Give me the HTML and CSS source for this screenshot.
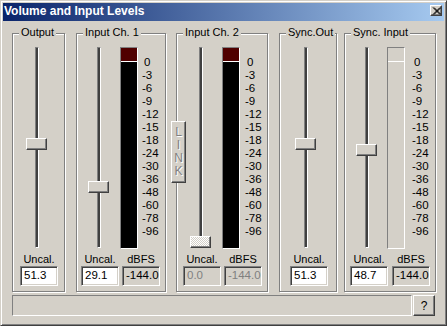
FILE: index.html
```html
<!DOCTYPE html>
<html>
<head>
<meta charset="utf-8">
<title>Volume and Input Levels</title>
<link rel="stylesheet" href="styles.css">
</head>
<body>
<div class="window">
  <div class="titlebar">
    <span class="title">Volume and Input Levels</span>
    <span class="close"><svg width="9" height="8" viewBox="0 0 9 8"><path d="M1 0.5 L8 7.5 M2 0.5 L9 7.5 M8 0.5 L1 7.5 M9 0.5 L2 7.5" stroke="#000" stroke-width="1" fill="none"/></svg></span>
  </div>
  <div class="groups">
    <section class="group g-out">
      <span class="legend">Output</span>
      <div class="upper">
        <div class="slider"><div class="track"></div><div class="thumb" style="top:91px"></div></div>
      </div>
      <div class="fields">
        <div class="field"><span class="cap">Uncal.</span><span class="edit">51.3</span></div>
      </div>
    </section>

    <section class="group g-ch1">
      <span class="legend">Input Ch. 1</span>
      <div class="upper">
        <div class="slider"><div class="track"></div><div class="thumb" style="top:134px"></div></div>
        <div class="meter"><div class="peak"></div></div>
        <ul class="scale">
          <li class="zero">0</li><li>-3</li><li>-6</li><li>-9</li><li>-12</li><li>-15</li><li>-18</li><li>-24</li><li>-30</li><li>-36</li><li>-48</li><li>-60</li><li>-78</li><li>-96</li>
        </ul>
      </div>
      <div class="fields">
        <div class="field"><span class="cap">Uncal.</span><span class="edit">29.1</span></div>
        <div class="field"><span class="cap">dBFS</span><span class="edit ro">-144.0</span></div>
      </div>
    </section>

    <section class="group g-ch2">
      <span class="legend">Input Ch. 2</span>
      <div class="link"><span>L</span><span>I</span><span>N</span><span>K</span></div>
      <div class="upper">
        <div class="slider"><div class="track"></div><div class="thumb off" style="top:189px"></div></div>
        <div class="meter"><div class="peak"></div></div>
        <ul class="scale">
          <li class="zero">0</li><li>-3</li><li>-6</li><li>-9</li><li>-12</li><li>-15</li><li>-18</li><li>-24</li><li>-30</li><li>-36</li><li>-48</li><li>-60</li><li>-78</li><li>-96</li>
        </ul>
      </div>
      <div class="fields">
        <div class="field"><span class="cap">Uncal.</span><span class="edit off">0.0</span></div>
        <div class="field"><span class="cap">dBFS</span><span class="edit off">-144.0</span></div>
      </div>
    </section>

    <section class="group g-sout">
      <span class="legend">Sync.Out</span>
      <div class="upper">
        <div class="slider"><div class="track"></div><div class="thumb" style="top:91px"></div></div>
      </div>
      <div class="fields">
        <div class="field"><span class="cap">Uncal.</span><span class="edit">51.3</span></div>
      </div>
    </section>

    <section class="group g-sin">
      <span class="legend">Sync. Input</span>
      <div class="upper">
        <div class="slider"><div class="track"></div><div class="thumb" style="top:97px"></div></div>
        <div class="meter idle"><div class="peak"></div></div>
        <ul class="scale">
          <li class="zero">0</li><li>-3</li><li>-6</li><li>-9</li><li>-12</li><li>-15</li><li>-18</li><li>-24</li><li>-30</li><li>-36</li><li>-48</li><li>-60</li><li>-78</li><li>-96</li>
        </ul>
      </div>
      <div class="fields">
        <div class="field"><span class="cap">Uncal.</span><span class="edit">48.7</span></div>
        <div class="field"><span class="cap">dBFS</span><span class="edit ro">-144.0</span></div>
      </div>
    </section>
  </div>
  <div class="bottom">
    <div class="status"></div>
    <div class="help">?</div>
  </div>
</div>
</body>
</html>
```

FILE: styles.css
```css
* { box-sizing: border-box; }
html, body { margin: 0; padding: 0; }
body {
  width: 447px; height: 326px; overflow: hidden;
  background: #d4d0c8;
  font-family: "Liberation Sans", Arial, sans-serif;
  font-size: 11px; color: #000;
}
.window {
  width: 447px; height: 326px;
  background: #d4d0c8;
  border: 1px solid; border-color: #d4d0c8 #404040 #404040 #d4d0c8;
  box-shadow: inset 1px 1px 0 #fff, inset -1px -1px 0 #808080;
  padding: 2px;
  display: flex; flex-direction: column;
}
.titlebar {
  height: 18px; flex: none;
  display: flex; align-items: flex-start; justify-content: space-between;
  padding: 0 2px 0 1px;
  background: linear-gradient(to right, #0a246a, #a6caf0);
}
.title { color: #fff; font-weight: bold; font-size: 12px; line-height: 16px; }
.close {
  margin-top: 2px; width: 12px; height: 11px;
  background: #d4d0c8;
  border: 1px solid; border-color: #fff #404040 #404040 #fff;
  box-shadow: inset -1px -1px 0 #808080;
  display: flex; align-items: center; justify-content: center;
}
.close svg { display: block; }
.groups { display: flex; margin-top: 12px; flex: none; }
.group {
  position: relative; flex: none;
  height: 259px;
  border: 1px solid #808080;
  box-shadow: inset 1px 1px 0 #fff, 1px 1px 0 #fff;
  display: flex; flex-direction: column;
  padding-top: 13px;
}
.legend {
  position: absolute; top: -8px; left: 6px;
  padding: 0 2px; line-height: 13px;
  background: #d4d0c8; white-space: nowrap;
}
.upper { display: flex; height: 202px; align-items: flex-start; }
.slider {
  position: relative; width: 21px; height: 201px;
  display: flex; justify-content: center; flex: none;
}
.track {
  width: 4px; height: 100%;
  border: 1px solid; border-color: #808080 #fff #fff #808080;
  background: #404040;
}
.thumb {
  position: absolute; left: 0; width: 21px; height: 12px;
  background: #d4d0c8;
  border: 1px solid; border-color: #fff #404040 #404040 #fff;
  box-shadow: inset -1px -1px 0 #808080;
}
.thumb.off {
  background: repeating-conic-gradient(#fff 0 25%, #d4d0c8 0 50%) 0 0 / 2px 2px;
}
.meter {
  width: 18px; height: 202px; flex: none;
  border: 1px solid; border-color: #808080 #fff #fff #808080;
  background: #000;
}
.peak { height: 14px; background: #500000; border-bottom: 1px solid #fff; }
.meter.idle { background: #d4d0c8; }
.meter.idle .peak { background: transparent; }
.scale {
  list-style: none; margin: 9px 0 0 0; padding: 0;
  font-size: 11.5px; line-height: 13px;
}
.scale .zero { padding-left: 2px; }
.fields { display: flex; margin-top: 4px; }
.field { display: flex; flex-direction: column; align-items: center; width: 38px; flex: none; }
.cap { line-height: 13px; white-space: nowrap; }
.edit {
  width: 38px; height: 20px;
  border: 1px solid; border-color: #808080 #fff #fff #808080;
  box-shadow: inset 1px 1px 0 #404040, inset -1px -1px 0 #d4d0c8;
  background: #fff;
  font-size: 11.5px; line-height: 17px; padding-left: 3px;
  white-space: nowrap; overflow: hidden;
}
.edit.ro { background: #d4d0c8; }
.edit.off { background: #d4d0c8; color: #808080; }

.g-out { width: 53px; margin-left: 9px; }
.g-out .upper { padding-left: 13px; }
.g-out .fields { padding-left: 7px; }

.g-ch1 { width: 90px; margin-left: 11px; }
.g-ch1 .upper { padding-left: 11px; }
.g-ch1 .meter { margin-left: 11px; }
.g-ch1 .scale { margin-left: 4px; }
.g-ch1 .fields { padding-left: 4px; gap: 3px; }

.g-ch2 { width: 92px; margin-left: 10px; }
.g-ch2 .upper { padding-left: 13px; }
.g-ch2 .meter { margin-left: 11px; }
.g-ch2 .scale { margin-left: 5px; }
.g-ch2 .fields { padding-left: 6px; gap: 3px; }

.g-sout { width: 58px; margin-left: 11px; }
.g-sout .upper { padding-left: 15px; }
.g-sout .fields { padding-left: 10px; }

.g-sin { width: 92px; margin-left: 7px; }
.g-sin .upper { padding-left: 11px; }
.g-sin .meter { margin-left: 10px; }
.g-sin .scale { margin-left: 7px; }
.g-sin .fields { padding-left: 5px; gap: 4px; }

.link {
  position: absolute; left: -6px; top: 87px;
  width: 15px; height: 62px;
  background: #d4d0c8;
  border: 1px solid; border-color: #fff #404040 #404040 #fff;
  box-shadow: inset -1px -1px 0 #808080;
  display: flex; flex-direction: column; align-items: center; justify-content: center;
  color: #808080; text-shadow: 1px 1px 0 #fff;
  font-size: 12px; line-height: 13px;
}
.bottom { display: flex; margin: 3px 0 0 9px; width: 423px; height: 21px; flex: none; }
.status {
  flex: 1; margin-right: 1px;
  border: 1px solid; border-color: #808080 #fff #fff #808080;
}
.help {
  width: 22px; height: 21px;
  border: 1px solid; border-color: #fff #404040 #404040 #fff;
  box-shadow: inset -1px -1px 0 #808080;
  display: flex; align-items: center; justify-content: center;
  font-size: 12px;
}
```
